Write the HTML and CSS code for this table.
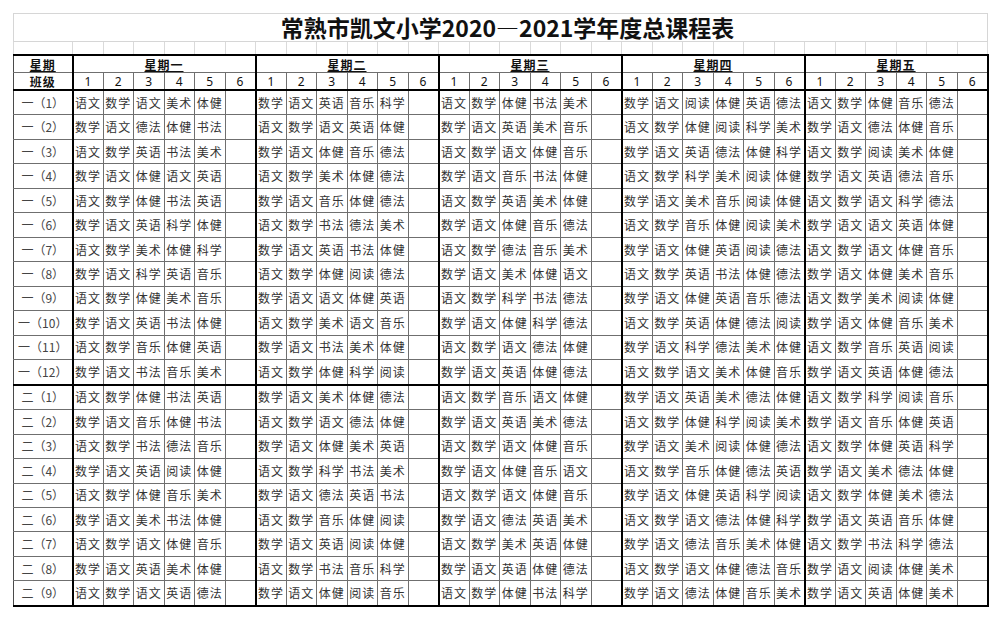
FILE: index.html
```html
<!DOCTYPE html>
<html lang="zh-CN">
<head>
<meta charset="utf-8">
<title>常熟市凯文小学2020—2021学年度总课程表</title>
<link rel="stylesheet" href="styles.css">
</head>
<body>
<table class="sheet">
<colgroup>
<col class="c-class">
<col class="c-p"><col class="c-p"><col class="c-p"><col class="c-p"><col class="c-p"><col class="c-p">
<col class="c-p"><col class="c-p"><col class="c-p"><col class="c-p"><col class="c-p"><col class="c-p">
<col class="c-p"><col class="c-p"><col class="c-p"><col class="c-p"><col class="c-p"><col class="c-p">
<col class="c-p"><col class="c-p"><col class="c-p"><col class="c-p"><col class="c-p"><col class="c-p">
<col class="c-p"><col class="c-p"><col class="c-p"><col class="c-p"><col class="c-p"><col class="c-p">
</colgroup>
<thead>
<tr class="r-title"><td colspan="31" class="title">常熟市凯文小学2020—2021学年度总课程表</td></tr>
<tr class="r-gap"><td></td><td></td><td></td><td></td><td></td><td></td><td></td><td></td><td></td><td></td><td></td><td></td><td></td><td></td><td></td><td></td><td></td><td></td><td></td><td></td><td></td><td></td><td></td><td></td><td></td><td></td><td></td><td></td><td></td><td></td><td></td></tr>
<tr class="r-day"><th><span class="ul">星期</span></th><th colspan="6"><span class="ul">星期一</span></th><th colspan="6"><span class="ul">星期二</span></th><th colspan="6"><span class="ul">星期三</span></th><th colspan="6"><span class="ul">星期四</span></th><th colspan="6"><span class="ul">星期五</span></th></tr>
<tr class="r-num"><th class="h-class">班级</th><th>1</th><th>2</th><th>3</th><th>4</th><th>5</th><th>6</th><th>1</th><th>2</th><th>3</th><th>4</th><th>5</th><th>6</th><th>1</th><th>2</th><th>3</th><th>4</th><th>5</th><th>6</th><th>1</th><th>2</th><th>3</th><th>4</th><th>5</th><th>6</th><th>1</th><th>2</th><th>3</th><th>4</th><th>5</th><th>6</th></tr>
</thead>
<tbody>
<tr><td>一（1）</td><td>语文</td><td>数学</td><td>语文</td><td>美术</td><td>体健</td><td></td><td>数学</td><td>语文</td><td>英语</td><td>音乐</td><td>科学</td><td></td><td>语文</td><td>数学</td><td>体健</td><td>书法</td><td>美术</td><td></td><td>数学</td><td>语文</td><td>阅读</td><td>体健</td><td>英语</td><td>德法</td><td>语文</td><td>数学</td><td>体健</td><td>音乐</td><td>德法</td><td></td></tr>
<tr><td>一（2）</td><td>数学</td><td>语文</td><td>德法</td><td>体健</td><td>书法</td><td></td><td>语文</td><td>数学</td><td>语文</td><td>英语</td><td>体健</td><td></td><td>数学</td><td>语文</td><td>英语</td><td>美术</td><td>音乐</td><td></td><td>语文</td><td>数学</td><td>体健</td><td>阅读</td><td>科学</td><td>美术</td><td>数学</td><td>语文</td><td>德法</td><td>体健</td><td>音乐</td><td></td></tr>
<tr><td>一（3）</td><td>语文</td><td>数学</td><td>英语</td><td>书法</td><td>美术</td><td></td><td>数学</td><td>语文</td><td>体健</td><td>音乐</td><td>德法</td><td></td><td>语文</td><td>数学</td><td>语文</td><td>体健</td><td>音乐</td><td></td><td>数学</td><td>语文</td><td>英语</td><td>德法</td><td>体健</td><td>科学</td><td>语文</td><td>数学</td><td>阅读</td><td>美术</td><td>体健</td><td></td></tr>
<tr><td>一（4）</td><td>数学</td><td>语文</td><td>体健</td><td>语文</td><td>英语</td><td></td><td>语文</td><td>数学</td><td>美术</td><td>体健</td><td>德法</td><td></td><td>数学</td><td>语文</td><td>音乐</td><td>书法</td><td>体健</td><td></td><td>语文</td><td>数学</td><td>科学</td><td>美术</td><td>阅读</td><td>体健</td><td>数学</td><td>语文</td><td>英语</td><td>德法</td><td>音乐</td><td></td></tr>
<tr><td>一（5）</td><td>语文</td><td>数学</td><td>体健</td><td>书法</td><td>英语</td><td></td><td>数学</td><td>语文</td><td>音乐</td><td>体健</td><td>德法</td><td></td><td>语文</td><td>数学</td><td>英语</td><td>美术</td><td>体健</td><td></td><td>数学</td><td>语文</td><td>美术</td><td>音乐</td><td>阅读</td><td>体健</td><td>语文</td><td>数学</td><td>语文</td><td>科学</td><td>德法</td><td></td></tr>
<tr><td>一（6）</td><td>数学</td><td>语文</td><td>英语</td><td>科学</td><td>体健</td><td></td><td>语文</td><td>数学</td><td>书法</td><td>德法</td><td>美术</td><td></td><td>数学</td><td>语文</td><td>体健</td><td>音乐</td><td>德法</td><td></td><td>语文</td><td>数学</td><td>音乐</td><td>体健</td><td>阅读</td><td>美术</td><td>数学</td><td>语文</td><td>语文</td><td>英语</td><td>体健</td><td></td></tr>
<tr><td>一（7）</td><td>语文</td><td>数学</td><td>美术</td><td>体健</td><td>科学</td><td></td><td>数学</td><td>语文</td><td>英语</td><td>书法</td><td>体健</td><td></td><td>语文</td><td>数学</td><td>德法</td><td>音乐</td><td>美术</td><td></td><td>数学</td><td>语文</td><td>体健</td><td>英语</td><td>阅读</td><td>德法</td><td>语文</td><td>数学</td><td>语文</td><td>体健</td><td>音乐</td><td></td></tr>
<tr><td>一（8）</td><td>数学</td><td>语文</td><td>科学</td><td>英语</td><td>音乐</td><td></td><td>语文</td><td>数学</td><td>体健</td><td>阅读</td><td>德法</td><td></td><td>数学</td><td>语文</td><td>美术</td><td>体健</td><td>语文</td><td></td><td>语文</td><td>数学</td><td>英语</td><td>书法</td><td>体健</td><td>德法</td><td>数学</td><td>语文</td><td>体健</td><td>美术</td><td>音乐</td><td></td></tr>
<tr><td>一（9）</td><td>语文</td><td>数学</td><td>体健</td><td>美术</td><td>音乐</td><td></td><td>数学</td><td>语文</td><td>语文</td><td>体健</td><td>英语</td><td></td><td>语文</td><td>数学</td><td>科学</td><td>书法</td><td>德法</td><td></td><td>数学</td><td>语文</td><td>体健</td><td>英语</td><td>音乐</td><td>德法</td><td>语文</td><td>数学</td><td>美术</td><td>阅读</td><td>体健</td><td></td></tr>
<tr><td>一（10）</td><td>数学</td><td>语文</td><td>英语</td><td>书法</td><td>体健</td><td></td><td>语文</td><td>数学</td><td>美术</td><td>语文</td><td>音乐</td><td></td><td>数学</td><td>语文</td><td>体健</td><td>科学</td><td>德法</td><td></td><td>语文</td><td>数学</td><td>英语</td><td>体健</td><td>德法</td><td>阅读</td><td>数学</td><td>语文</td><td>体健</td><td>音乐</td><td>美术</td><td></td></tr>
<tr><td>一（11）</td><td>语文</td><td>数学</td><td>音乐</td><td>体健</td><td>英语</td><td></td><td>数学</td><td>语文</td><td>书法</td><td>美术</td><td>体健</td><td></td><td>语文</td><td>数学</td><td>语文</td><td>德法</td><td>体健</td><td></td><td>数学</td><td>语文</td><td>科学</td><td>德法</td><td>美术</td><td>体健</td><td>语文</td><td>数学</td><td>音乐</td><td>英语</td><td>阅读</td><td></td></tr>
<tr class="grp-end"><td>一（12）</td><td>数学</td><td>语文</td><td>书法</td><td>音乐</td><td>美术</td><td></td><td>语文</td><td>数学</td><td>体健</td><td>科学</td><td>阅读</td><td></td><td>数学</td><td>语文</td><td>英语</td><td>体健</td><td>德法</td><td></td><td>语文</td><td>数学</td><td>语文</td><td>美术</td><td>体健</td><td>音乐</td><td>数学</td><td>语文</td><td>英语</td><td>体健</td><td>德法</td><td></td></tr>
<tr><td>二（1）</td><td>语文</td><td>数学</td><td>体健</td><td>书法</td><td>英语</td><td></td><td>数学</td><td>语文</td><td>美术</td><td>体健</td><td>德法</td><td></td><td>语文</td><td>数学</td><td>音乐</td><td>语文</td><td>体健</td><td></td><td>数学</td><td>语文</td><td>英语</td><td>美术</td><td>德法</td><td>体健</td><td>语文</td><td>数学</td><td>科学</td><td>阅读</td><td>音乐</td><td></td></tr>
<tr><td>二（2）</td><td>数学</td><td>语文</td><td>音乐</td><td>体健</td><td>书法</td><td></td><td>语文</td><td>数学</td><td>语文</td><td>德法</td><td>体健</td><td></td><td>数学</td><td>语文</td><td>英语</td><td>美术</td><td>德法</td><td></td><td>语文</td><td>数学</td><td>体健</td><td>科学</td><td>阅读</td><td>美术</td><td>数学</td><td>语文</td><td>音乐</td><td>体健</td><td>英语</td><td></td></tr>
<tr><td>二（3）</td><td>语文</td><td>数学</td><td>书法</td><td>德法</td><td>音乐</td><td></td><td>数学</td><td>语文</td><td>体健</td><td>美术</td><td>英语</td><td></td><td>语文</td><td>数学</td><td>语文</td><td>体健</td><td>音乐</td><td></td><td>数学</td><td>语文</td><td>美术</td><td>阅读</td><td>体健</td><td>德法</td><td>语文</td><td>数学</td><td>体健</td><td>英语</td><td>科学</td><td></td></tr>
<tr><td>二（4）</td><td>数学</td><td>语文</td><td>英语</td><td>阅读</td><td>体健</td><td></td><td>语文</td><td>数学</td><td>科学</td><td>书法</td><td>美术</td><td></td><td>数学</td><td>语文</td><td>体健</td><td>音乐</td><td>语文</td><td></td><td>语文</td><td>数学</td><td>音乐</td><td>体健</td><td>德法</td><td>英语</td><td>数学</td><td>语文</td><td>美术</td><td>德法</td><td>体健</td><td></td></tr>
<tr><td>二（5）</td><td>语文</td><td>数学</td><td>体健</td><td>音乐</td><td>美术</td><td></td><td>数学</td><td>语文</td><td>德法</td><td>英语</td><td>书法</td><td></td><td>语文</td><td>数学</td><td>语文</td><td>体健</td><td>音乐</td><td></td><td>数学</td><td>语文</td><td>体健</td><td>英语</td><td>科学</td><td>阅读</td><td>语文</td><td>数学</td><td>体健</td><td>美术</td><td>德法</td><td></td></tr>
<tr><td>二（6）</td><td>数学</td><td>语文</td><td>美术</td><td>书法</td><td>体健</td><td></td><td>语文</td><td>数学</td><td>音乐</td><td>体健</td><td>阅读</td><td></td><td>数学</td><td>语文</td><td>德法</td><td>英语</td><td>美术</td><td></td><td>语文</td><td>数学</td><td>语文</td><td>德法</td><td>体健</td><td>科学</td><td>数学</td><td>语文</td><td>英语</td><td>音乐</td><td>体健</td><td></td></tr>
<tr><td>二（7）</td><td>语文</td><td>数学</td><td>语文</td><td>体健</td><td>音乐</td><td></td><td>数学</td><td>语文</td><td>英语</td><td>阅读</td><td>体健</td><td></td><td>语文</td><td>数学</td><td>美术</td><td>英语</td><td>体健</td><td></td><td>数学</td><td>语文</td><td>德法</td><td>音乐</td><td>美术</td><td>体健</td><td>语文</td><td>数学</td><td>书法</td><td>科学</td><td>德法</td><td></td></tr>
<tr><td>二（8）</td><td>数学</td><td>语文</td><td>英语</td><td>美术</td><td>体健</td><td></td><td>语文</td><td>数学</td><td>书法</td><td>音乐</td><td>科学</td><td></td><td>数学</td><td>语文</td><td>英语</td><td>体健</td><td>德法</td><td></td><td>语文</td><td>数学</td><td>语文</td><td>体健</td><td>德法</td><td>音乐</td><td>数学</td><td>语文</td><td>阅读</td><td>体健</td><td>美术</td><td></td></tr>
<tr><td>二（9）</td><td>语文</td><td>数学</td><td>语文</td><td>英语</td><td>德法</td><td></td><td>数学</td><td>语文</td><td>体健</td><td>阅读</td><td>音乐</td><td></td><td>语文</td><td>数学</td><td>体健</td><td>书法</td><td>科学</td><td></td><td>数学</td><td>语文</td><td>德法</td><td>体健</td><td>音乐</td><td>美术</td><td>数学</td><td>语文</td><td>英语</td><td>体健</td><td>美术</td><td></td></tr>
</tbody>
</table>
</body>
</html>
```

FILE: styles.css
```css
html, body {
  margin: 0;
  padding: 0;
  background: #ffffff;
}

body {
  padding: 13px 0 0 13px;
}

.sheet {
  border-collapse: collapse;
  table-layout: fixed;
  width: 974px;
  font-family: "Noto Sans CJK SC", "Noto Sans", sans-serif;
  color: #262626;
}

.c-class { width: 59px; }
.c-p { width: 30.5px; }

.sheet td,
.sheet th {
  padding: 0;
  text-align: center;
  white-space: nowrap;
  overflow: hidden;
  border: 1px solid #6f6f6f;
  font-weight: 400;
}

/* title + spacer rows: faint spreadsheet grid */
.sheet .r-title td {
  height: 27px;
  border: 1px solid #d6d6d6;
  font-size: 23px;
  font-weight: 700;
  line-height: 27px;
  color: #111;
  padding: 0 0 0 14px;
  vertical-align: middle;
  overflow: visible;
}

.r-gap td {
  height: 12px;
  border: 1px solid #dadada;
}

/* header rows */
.r-day th,
.r-num th {
  height: 16px;
  vertical-align: bottom;
  line-height: 14px;
}

.r-day th {
  border-top: 2px solid #000;
  font-size: 12px;
  font-weight: 700;
  letter-spacing: 1px;
  color: #111;
}

.r-day th + th {
  border-left: 2px solid #000;
}

.ul {
  text-decoration: underline;
  text-underline-offset: 1px;
}

.r-num th {
  border-bottom: 2px solid #000;
  font-family: "Noto Sans", "Liberation Sans", sans-serif;
  font-size: 12px;
  color: #111;
}

.r-num .h-class {
  font-family: "Noto Sans CJK SC", sans-serif;
  font-weight: 700;
  letter-spacing: 1px;
}

/* day separators */
.r-num th:nth-child(6n+2),
tbody td:nth-child(6n+2) {
  border-left: 2px solid #000;
}

.r-day th:first-child,
.r-num th:first-child,
tbody td:first-child {
  border-right: 2px solid #000;
  border-left: 1px solid #4a4a4a;
}

.r-day th:last-child,
.r-num th:last-child,
tbody td:last-child {
  border-right: 2px solid #000;
}

/* body rows */
tbody td {
  height: 23.48px;
  font-size: 12px;
  font-weight: 300;
  letter-spacing: 1px;
  line-height: 16px;
  vertical-align: middle;
  padding-top: 1px;
  border-top: 1px solid #8c8c8c;
  border-bottom: 1px solid #8c8c8c;
  color: #333;
}

tbody td:first-child {
  letter-spacing: 0;
  color: #444;
}

tbody tr.grp-end td {
  border-bottom: 2px solid #000;
}

tbody tr:last-child td {
  border-bottom: 2px solid #000;
}
```
